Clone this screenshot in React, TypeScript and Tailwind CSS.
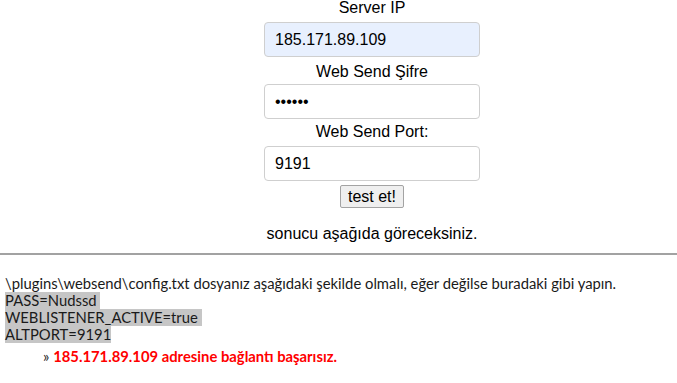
import React from "react";

export default function App() {
  return (
    <div className="w-[677px] h-[383px] bg-white overflow-hidden text-black">
      <div
        className="flex flex-col items-center pl-[67px] text-[16px]"
        style={{ fontFamily: '"Liberation Sans", Arial, sans-serif' }}
      >
        <div className="h-[18px] leading-[18px] -mt-[1px]">Server IP</div>
        <input
          readOnly
          value="185.171.89.109"
          className="mt-[5px] w-[216px] h-[35px] border border-[#cfcfcf] rounded-[4px] bg-[#e8f0fe] pl-[10px] text-[16px] text-black outline-none"
        />
        <div className="h-[18px] leading-[18px] mt-[6px]">Web Send Şifre</div>
        <input
          readOnly
          type="password"
          value="123456"
          className="mt-[3px] w-[216px] h-[35px] border border-[#cfcfcf] rounded-[4px] bg-white pl-[10px] text-[16px] text-black outline-none"
        />
        <div className="h-[18px] leading-[18px] mt-[4px]">Web Send Port:</div>
        <input
          readOnly
          value="9191"
          className="mt-[5px] w-[216px] h-[35px] border border-[#cfcfcf] rounded-[4px] bg-white pl-[10px] text-[16px] text-black outline-none"
        />
        <button className="mt-[4px] w-[64px] h-[23px] border border-[#a3a3a3] rounded-[2px] bg-[#efefef] text-[16px] leading-[18px] text-black">
          test et!
        </button>
        <div className="h-[18px] leading-[18px] mt-[17px]">sonucu aşağıda göreceksiniz.</div>
      </div>
      <div className="mt-[10px] h-[2px] bg-[#a2a2a2]" />
      <div
        className="mt-[20px] pl-[5px] text-[14.8px] leading-[17px] text-[#1a1a1a]"
        style={{ fontFamily: 'Lato, "Open Sans", sans-serif' }}
      >
        <div>\plugins\websend\config.txt dosyanız aşağıdaki şekilde olmalı, eğer değilse buradaki gibi yapın.</div>
        <div className="w-fit bg-[#c6c6c6] whitespace-pre">PASS=Nudssd </div>
        <div className="w-fit bg-[#c6c6c6] whitespace-pre">WEBLISTENER_ACTIVE=true </div>
        <div className="w-fit bg-[#c6c6c6] whitespace-pre">ALTPORT=9191</div>
        <div className="mt-[5px] pl-[38px]">
          <span>» </span>
          <span className="font-bold text-[#ff0000]">185.171.89.109 adresine bağlantı başarısız.</span>
        </div>
      </div>
    </div>
  );
}
